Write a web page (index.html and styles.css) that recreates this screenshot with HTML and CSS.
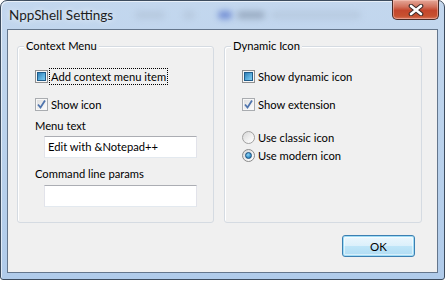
FILE: index.html
```html
<!DOCTYPE html>
<html lang="en">
<head>
    <meta charset="UTF-8">
    <title>NppShell Settings</title>
    <link rel="stylesheet" href="styles.css">
</head>
<body>

<div class="window">
    <!-- Title bar -->
    <div class="titlebar">
        <span class="title">NppShell Settings</span>
        <span class="haze haze-1"></span>
        <span class="haze haze-2"></span>
        <span class="haze haze-3"></span>
        <span class="haze haze-4"></span>
        <span class="haze haze-5"></span>
        <button class="close-btn" aria-label="Close">
            <svg width="16" height="12" viewBox="0 0 16 12">
                <path d="M3 2 L13 10 M13 2 L3 10" stroke="#3c2a28" stroke-width="4.6" stroke-linecap="round"/>
                <path d="M3 2 L13 10 M13 2 L3 10" stroke="#ffffff" stroke-width="2.6" stroke-linecap="round"/>
            </svg>
        </button>
    </div>

    <!-- Dialog body -->
    <div class="client">
        <div class="groups">
            <div class="group">
                <span class="group-title">Context Menu</span>
                <label class="row first">
                    <span class="box mixed"></span>
                    <span class="focus">Add context menu item</span>
                </label>
                <label class="row second">
                    <span class="box checked">
                        <svg width="11" height="11" viewBox="0 0 11 11"><path d="M2 5.5 L4.5 8.5 L9 1.5" fill="none" stroke="#4f74ad" stroke-width="1.8"/></svg>
                    </span>
                    <span>Show icon</span>
                </label>
                <div class="field-label label-menu">Menu text</div>
                <div class="textbox box-menu">Edit with &amp;Notepad++</div>
                <div class="field-label label-cmd">Command line params</div>
                <div class="textbox box-cmd"></div>
            </div>

            <div class="group">
                <span class="group-title">Dynamic Icon</span>
                <label class="row first">
                    <span class="box mixed"></span>
                    <span>Show dynamic icon</span>
                </label>
                <label class="row second">
                    <span class="box checked">
                        <svg width="11" height="11" viewBox="0 0 11 11"><path d="M2 5.5 L4.5 8.5 L9 1.5" fill="none" stroke="#4f74ad" stroke-width="1.8"/></svg>
                    </span>
                    <span>Show extension</span>
                </label>
                <label class="row radio-classic">
                    <span class="radio"></span>
                    <span>Use classic icon</span>
                </label>
                <label class="row radio-modern">
                    <span class="radio selected"></span>
                    <span>Use modern icon</span>
                </label>
            </div>
        </div>

        <div class="actions">
            <button class="ok-btn">OK</button>
        </div>
    </div>
</div>

</body>
</html>
```

FILE: styles.css
```css
body {
    margin: 0;
    background-color: #ffffff;
    font-family: Lato, "Noto Sans", sans-serif;
    font-size: 11.2px;
    color: #000;
}

/* Window frame */
.window {
    width: 445px;
    height: 280px;
    box-sizing: border-box;
    display: flex;
    flex-direction: column;
    padding: 0 6px 6px 6px;
    border: 1px solid #3d4c5e;
    border-radius: 7px 7px 3px 3px;
    background: linear-gradient(to bottom, #c3d7ee 0%, #bcd3ec 40%, #b0cbea 100%);
    box-shadow: inset 1px 1px 0 rgba(255, 255, 255, 0.6);
}

.titlebar {
    position: relative;
    height: 28px;
    flex-shrink: 0;
}

.title {
    position: absolute;
    left: 2px;
    top: 6px;
    font-size: 13.5px;
    line-height: 16px;
    color: #1e1e1e;
    text-shadow: 0 0 6px rgba(255, 255, 255, 0.9);
}

/* blurred glass behind the caption */
.haze {
    position: absolute;
    top: 10px;
    height: 8px;
    border-radius: 4px;
    filter: blur(3px);
    background-color: #a9b9cd;
}

.haze-1 { left: 128px; width: 30px; opacity: 0.45; }
.haze-2 { left: 176px; width: 12px; opacity: 0.45; }
.haze-3 { left: 211px; width: 14px; background-color: #5876cc; opacity: 0.75; }
.haze-4 { left: 230px; width: 28px; background-color: #7a8aa0; opacity: 0.55; }
.haze-5 { left: 264px; width: 90px; opacity: 0.4; }

.close-btn {
    position: absolute;
    right: -1px;
    top: -1px;
    width: 47px;
    height: 20px;
    padding: 0;
    display: flex;
    align-items: center;
    justify-content: center;
    border: 1px solid #4a2c28;
    border-top: none;
    border-radius: 0 0 5px 5px;
    background: linear-gradient(to bottom, #e5a899 0%, #d2735e 35%, #c4462c 55%, #c7512f 85%, #d77760 100%);
    box-shadow: inset 0 0 0 1px rgba(255, 210, 200, 0.45);
}

/* Client area */
.client {
    flex: 1;
    background-color: #f0f0f0;
    border: 1px solid #64768c;
}

.groups {
    display: grid;
    grid-template-columns: 197px 198px;
    column-gap: 10px;
    padding: 16px 0 0 9px;
}

.group {
    position: relative;
    height: 177px;
    box-sizing: border-box;
    border: 1px solid #d5dbe2;
    border-radius: 3px;
    box-shadow: inset 1px 1px 0 #ffffff;
    padding-left: 17px;
    display: flex;
    flex-direction: column;
    align-items: flex-start;
}

.group-title {
    position: absolute;
    left: 6px;
    top: -9px;
    padding: 0 2px;
    line-height: 16px;
    background-color: #f0f0f0;
}

.row {
    display: flex;
    align-items: center;
    gap: 3px;
    height: 17px;
    white-space: nowrap;
}

.row.first { margin-top: 21px; }
.row.second { margin-top: 11px; }
.row.radio-classic { margin-top: 16px; }
.row.radio-modern { margin-top: 1px; }

.focus {
    outline: 1px dotted #000;
    outline-offset: 0;
    padding: 0 1px;
    margin-left: -1px;
    line-height: 15px;
}

/* Checkboxes */
.box {
    width: 13px;
    height: 13px;
    box-sizing: border-box;
    flex-shrink: 0;
    display: flex;
    align-items: center;
    justify-content: center;
    border: 1px solid #8f8f8f;
    background: linear-gradient(135deg, #dcdcdc 0%, #f4f4f4 70%, #ffffff 100%);
    box-shadow: inset 0 0 0 1px #f7f7f7;
}

.box.mixed::after {
    content: "";
    width: 7px;
    height: 7px;
    border: 1px solid #1f5c8a;
    background: linear-gradient(135deg, #2f7fb6 0%, #5fb2df 60%, #7fcaef 100%);
}

.box.checked {
    border-color: #a9acb0;
}

.box svg {
    display: block;
}

/* Radio buttons */
.radio {
    width: 13px;
    height: 13px;
    box-sizing: border-box;
    flex-shrink: 0;
    display: flex;
    align-items: center;
    justify-content: center;
    border: 1px solid #a0a0a0;
    border-radius: 50%;
    background: linear-gradient(135deg, #d7d7d7 0%, #f2f2f2 60%, #ffffff 100%);
}

.radio.selected {
    border-color: #8a8a8a;
}

.radio.selected::after {
    content: "";
    width: 5px;
    height: 5px;
    border-radius: 50%;
    border: 1px solid #1b4e7c;
    background: radial-gradient(circle at 40% 35%, #8fd3f5 0%, #2d8ac3 70%);
}

/* Labels and text boxes */
.field-label {
    line-height: 15px;
}

.label-menu { margin-top: 5px; }
.label-cmd { margin-top: 8px; }

.textbox {
    width: 153px;
    height: 22px;
    box-sizing: border-box;
    margin-left: 9px;
    padding: 0 3px;
    background-color: #fff;
    border: 1px solid #e2e3ea;
    border-top-color: #abadb3;
    border-bottom-color: #e3e9ef;
    line-height: 20px;
    white-space: nowrap;
}

.box-menu { margin-top: 3px; }
.box-cmd { margin-top: 4px; }

/* Bottom button row */
.actions {
    display: flex;
    justify-content: flex-end;
    padding: 12px 22px 0 0;
}

.ok-btn {
    width: 73px;
    height: 22px;
    padding: 0;
    font-family: Lato, "Noto Sans", sans-serif;
    font-size: 11.5px;
    color: #000;
    border: 1px solid #3c7fb1;
    border-radius: 3px;
    background: linear-gradient(to bottom, #ecf7fd 0%, #dcf0fb 48%, #bfe5f8 52%, #b0dcf3 100%);
    box-shadow: inset 0 0 0 1px #9fdcf6, inset 0 0 0 2px rgba(255, 255, 255, 0.5);
}
```
